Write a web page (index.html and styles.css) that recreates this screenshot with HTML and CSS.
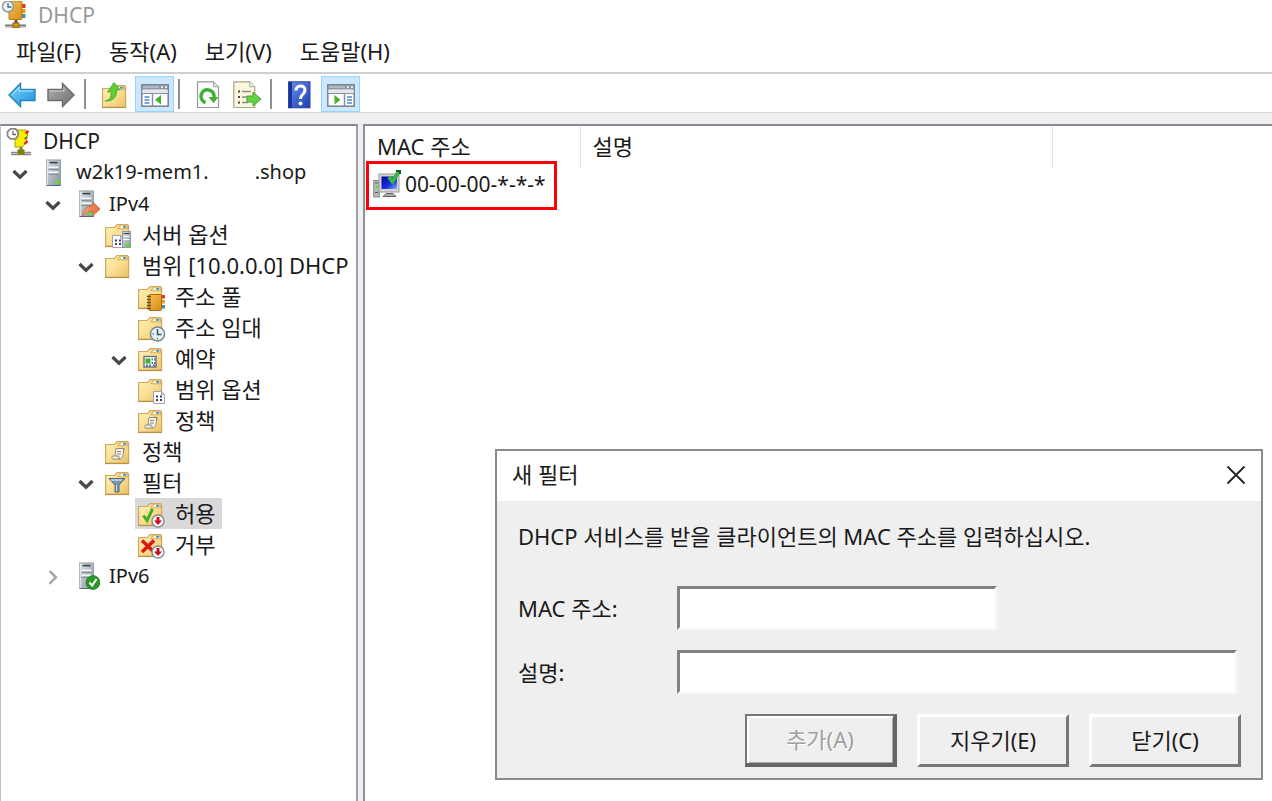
FILE: index.html
```html
<!DOCTYPE html>
<html lang="ko">
<head>
<meta charset="utf-8">
<title>DHCP</title>
<link rel="stylesheet" href="styles.css">
</head>
<body>
<svg class="defs" aria-hidden="true">
  <defs>
    <linearGradient id="gFolder" x1="0" y1="0" x2="1" y2="1"><stop offset="0" stop-color="#fff0b8"/><stop offset=".5" stop-color="#fbdf94"/><stop offset="1" stop-color="#e9bf62"/></linearGradient>
    <linearGradient id="gServer" x1="0" y1="0" x2="1" y2="1"><stop offset="0" stop-color="#dfe4e8"/><stop offset="1" stop-color="#84929d"/></linearGradient>
    <linearGradient id="gBlue" x1="0" y1="0" x2="1" y2="1"><stop offset="0" stop-color="#7fd6fb"/><stop offset="1" stop-color="#1b8fdc"/></linearGradient>
    <linearGradient id="gGray" x1="0" y1="0" x2="1" y2="1"><stop offset="0" stop-color="#b0b0b0"/><stop offset="1" stop-color="#6f6f6f"/></linearGradient>
    <linearGradient id="gHelp" x1="0" y1="0" x2="1" y2="1"><stop offset="0" stop-color="#6d8fe8"/><stop offset="1" stop-color="#1c3fb4"/></linearGradient>
    <linearGradient id="gBook" x1="0" y1="0" x2="1" y2="1"><stop offset="0" stop-color="#f6c15a"/><stop offset="1" stop-color="#d98a12"/></linearGradient>
    <linearGradient id="gArrow" x1="0" y1="0" x2="1" y2="0"><stop offset="0" stop-color="#f6a37c"/><stop offset="1" stop-color="#ea6a35"/></linearGradient>
    <linearGradient id="gScreen" x1="0" y1="0" x2="1" y2="1"><stop offset="0" stop-color="#0000a0"/><stop offset=".6" stop-color="#1c34d8"/><stop offset="1" stop-color="#7fb4ff"/></linearGradient>
    <symbol id="folder" viewBox="0 0 28 28">
      <path d="M.6 6.500 9.500 6.500 12 3.600 22.500 3.600 23.600 5v20.400H.6z" fill="url(#gFolder)" stroke="#d0a95c" stroke-width="1.200"/>
      <path d="M12.500 7.800 14.300 5h7.700l1 2.800z" fill="#f7d98c" stroke="#c9a050" stroke-width=".7"/>
      <rect x="16" y="5" width="5" height="1.800" fill="#fff"/><rect x="18" y="5" width="3" height="1.800" fill="#3f9be0"/>
      <path d="M0 25.500h24" stroke="#b9924a" stroke-width="1.200"/>
    </symbol>
    <symbol id="server" viewBox="0 0 28 28">
      <rect x="7.600" y="1" width="13.800" height="25.500" fill="url(#gServer)" stroke="#8c979f" stroke-width="1"/>
      <path d="M8.200 1.500v24.500" stroke="#eef2f4"/>
      <path d="M10.500 3.600h8" stroke="#34424c" stroke-width="1.600"/>
      <path d="M9.500 8.500h10M9.500 13.500h10" stroke="#f6fafc" stroke-width="2"/>
      <path d="M9.500 10.200h10M9.500 15.200h10" stroke="#6c7c88"/>
      <path d="M8 26.500h13.500" stroke="#59656e"/>
      <rect x="16.500" y="22" width="3.500" height="3" fill="#5ee51c"/>
    </symbol>
    <symbol id="notes" viewBox="0 0 12 13">
      <path d="M.5.5h8l3 3v9H.5z" fill="#fff" stroke="#a3a3ad"/><path d="M8.500.5v3h3" fill="none" stroke="#a3a3ad"/>
      <path d="M3 5.500h2M7 5.500h2M3 9h2M7 9h2" stroke="#3b3b6b" stroke-width="2"/>
    </symbol>
    <symbol id="scroll" viewBox="0 0 28 28">
      <use href="#folder"/>
      <path d="M11 10.500h8.500c-1 1-1 2-1 3.500-.3 3-.8 7-4 7H7.500c-1-.5-1-3 .5-3h2c.5-3 .3-6 1-7.500z" fill="#f4f1e6" stroke="#8f8b80"/>
      <path d="M10 18h3.500c.8 1-.2 3 1.500 3M12 13.500h4M11.800 16h4M16 10.500c2-1.500 4 2 2.500 3" fill="none" stroke="#8a867a"/>
    </symbol>
    <symbol id="down" viewBox="0 0 14 14">
      <circle cx="7" cy="7" r="6" fill="#fff" stroke="#8a8a8a" stroke-width="1.400"/><path d="M5.500 3h3v3.500h2.700L7 11 2.800 6.500h2.700z" fill="#c41425"/>
    </symbol>
    <symbol id="chev" viewBox="0 0 16 16"><path d="M1.500 5 8 11.200 14.500 5" fill="none" stroke="#484848" stroke-width="3.200"/></symbol>
    <symbol id="console" viewBox="0 0 28 28">
      <rect x=".8" y="3.800" width="26.400" height="21.400" fill="#fff" stroke="#79818e" stroke-width="1.500"/>
      <rect x="1" y="4" width="26" height="4.500" fill="#8d96a5"/><path d="M2 6h16" stroke="#c9d0da" stroke-width="1.200"/><path d="M20 6h2M24 6h2" stroke="#fff" stroke-width="1.500"/>
      <path d="M1.500 10.500h25" stroke="#e3e7ee" stroke-width="3"/><path d="M1 12.500h26" stroke="#8690a0"/>
    </symbol>
  </defs>
</svg>

<header class="titlebar">
  <svg class="icon" viewBox="0 0 28 28" aria-hidden="true">
    <path d="M4 24.500h21" stroke="#777" stroke-width="2"/><path d="M4 26.500h21" stroke="#ccc"/>
    <path d="M15 18v5" stroke="#555" stroke-width="3"/><rect x="12" y="22" width="6" height="4.500" fill="#d09a10" stroke="#8a6508"/>
    <path d="M20.500 3h4v4h-4z" fill="#e33526"/><path d="M20.500 8h4v4h-4z" fill="#d6a428"/><path d="M20.500 13h4v4h-4z" fill="#3a92a2"/>
    <rect x="8" y="0" width="13" height="18.500" rx="1" fill="url(#gBook)" stroke="#ba7a18"/>
    <circle cx="7" cy="5.500" r="5.500" fill="#edf6fa" stroke="#8b98a2" stroke-width="1.500"/><path d="M7 2v4h3.500" fill="none" stroke="#52606b" stroke-width="1.300"/>
  </svg>
  <h1 class="titlebar-text">DHCP</h1>
</header>

<nav class="menubar">
  <button class="menu">파일(F)</button>
  <button class="menu">동작(A)</button>
  <button class="menu">보기(V)</button>
  <button class="menu">도움말(H)</button>
</nav>

<div class="toolbar">
  <button class="tool" aria-label="뒤로"><svg class="icon" viewBox="0 0 28 28"><path d="M1 14 12.500 2.500v6h14.500v11H12.500v6z" fill="url(#gBlue)" stroke="#2684bb" stroke-width="1.400"/><path d="M4 13.500 11 6.500v3.500h14" fill="none" stroke="#b8ecff"/></svg></button>
  <button class="tool" aria-label="앞으로"><svg class="icon" viewBox="0 0 28 28"><path d="M27 14 15.500 2.500v6H1v11h14.500v6z" fill="url(#gGray)" stroke="#6c6c6c" stroke-width="1.400"/><path d="M2.500 10H17V6.500" fill="none" stroke="#d0d0d0"/></svg></button>
  <span class="sep"></span>
  <button class="tool" aria-label="한 수준 위로"><svg class="icon" viewBox="0 0 28 28"><use href="#folder" x="2" y="1" width="28" height="28"/><path d="M5 20c5-1 6.500-4 6-9H7.500L14 1.500 20 8.500l-3.500 1c1 6-4 11.500-11.500 10.500z" fill="#5fcb36" stroke="#46a626" stroke-width=".8"/></svg></button>
  <button class="tool on" aria-label="콘솔 트리 표시"><svg class="icon" viewBox="0 0 28 28"><use href="#console"/><path d="M11.500 12.500v12.500" stroke="#8690a0" stroke-width="1.500"/><path d="M3.500 16h5M3.500 19h5M3.500 22h5" stroke="#4d86cc" stroke-width="1.500"/><path d="M20 14v9.500L14 18.800z" fill="#48b02c"/></svg></button>
  <span class="sep"></span>
  <button class="tool" aria-label="새로 고침"><svg class="icon" viewBox="0 0 28 28"><path d="M3.500.8h16l5 5v20.700h-21z" fill="#fafafa" stroke="#999" stroke-width="1.200"/><path d="M19.500.8v5h5" fill="#ddd" stroke="#aaa"/><path d="M11.500 21.500A6.500 6.500 0 1 1 20 16" fill="none" stroke="#3fb035" stroke-width="3.600"/><path d="M14.500 16h10L19.500 22z" fill="#3fb035"/></svg></button>
  <button class="tool" aria-label="목록 내보내기"><svg class="icon" viewBox="0 0 28 28"><path d="M.8.800h16l5 5v20.700h-21z" fill="#fdf8dc" stroke="#aaa48c" stroke-width="1.200"/><path d="M16.800.8v5h5" fill="#eee" stroke="#aaa"/><path d="M5 10.500h2M5 16h2M5 21.500h2" stroke="#444" stroke-width="2"/><path d="M9 10.500h9M9 16h6M9 21.500h6" stroke="#8d8a99" stroke-width="1.600"/><path d="M14 15h6v-4l8 7-8 7v-4h-6z" fill="#65cf45" stroke="#48a92e"/></svg></button>
  <span class="sep"></span>
  <button class="tool" aria-label="도움말"><svg class="icon" viewBox="0 0 28 28"><rect x="2.500" y=".8" width="21.500" height="26" fill="url(#gHelp)" stroke="#2846a4"/><path d="M4.500 1v26" stroke="#17349c" stroke-width="3"/><path d="M10 9.500c0-6 9-6 9-.5 0 4.500-4.500 4-4.500 9" fill="none" stroke="#fff" stroke-width="3"/><circle cx="14.500" cy="22.500" r="2" fill="#fff"/></svg></button>
  <button class="tool on" aria-label="작업 창 표시"><svg class="icon" viewBox="0 0 28 28"><use href="#console"/><path d="M17.500 12.500v12.500" stroke="#8690a0" stroke-width="1.500"/><path d="M20 16h5M20 19h5M20 22h5" stroke="#4d86cc" stroke-width="1.500"/><path d="M7.500 14v9.500l6-4.700z" fill="#48b02c"/></svg></button>
</div>

<main class="panes">
  <section class="pane tree">
    <div class="node">
      <svg class="icon" viewBox="0 0 28 28"><path d="M5 24.500h20M5 26.500h20" stroke="#888" stroke-width="1.500"/><path d="M15 17v5" stroke="#777" stroke-width="3"/><rect x="11.500" y="21.500" width="7" height="5" fill="#808000"/><path d="M9 2h10.500l2 2v4l-1.500 1 1 5-5 5H9z" fill="#f5f000" stroke="#a8a400"/><path d="M19.500 5.500l3-2.500M18.500 16l3-3" stroke="#ef2020" stroke-width="2.400"/><path d="M18.500 11l3-2" stroke="#808000" stroke-width="2"/><path d="M4.500.8h5l2.500 3v4l-2.500 3h-5l-3-3v-4z" fill="#fff" stroke="#888" stroke-width="1.800"/><path d="M7 3v3.500H10" fill="none" stroke="#666" stroke-width="1.300"/></svg>
      <span class="latin">DHCP</span>
    </div>
    <ul class="branch">
      <li>
        <div class="row"><svg class="chev"><use href="#chev"/></svg><div class="node"><svg class="icon"><use href="#server"/></svg><span class="name host"><span>w2k19-mem1.</span><span>.shop</span></span></div></div>
        <ul class="branch nested">
          <li>
            <div class="row"><svg class="chev"><use href="#chev"/></svg><div class="node"><svg class="icon" viewBox="0 0 28 28"><use href="#server"/><path d="M11 26c0-7 4-10 10-10v-4l7 7-7 6.500V21c-4 0-7 1-10 5z" fill="url(#gArrow)" stroke="#d85f35" stroke-width=".8"/></svg><span class="name">IPv4</span></div></div>
            <ul class="branch nested">
              <li><div class="row leaf"><div class="node"><svg class="icon" viewBox="0 0 28 28"><use href="#folder"/><use href="#notes" x="7" y="14" width="12" height="13"/><rect x="17.500" y="10.500" width="8" height="16" fill="url(#gServer)" stroke="#8c979f"/><path d="M18.500 12.500h6" stroke="#34424c"/><path d="M18.500 15.500h6M18.500 18.500h6" stroke="#fff"/><rect x="21" y="22.500" width="4" height="3" fill="#5ee51c"/></svg><span>서버 옵션</span></div></div></li>
              <li>
                <div class="row"><svg class="chev"><use href="#chev"/></svg><div class="node"><svg class="icon"><use href="#folder"/></svg><span>범위 [10.0.0.0] DHCP</span></div></div>
                <ul class="branch nested">
                  <li><div class="row leaf"><div class="node"><svg class="icon" viewBox="0 0 28 28"><use href="#folder"/><path d="M23 12h4v3.500h-4z" fill="#e33526"/><path d="M23 17h4v3.500h-4z" fill="#d6a428"/><path d="M23 22h4v3.500h-4z" fill="#3a92a2"/><rect x="11" y="11.500" width="12.500" height="16" rx="1" fill="url(#gBook)" stroke="#a86a12"/><path d="M9 13.500h4M9 16.500h4M9 19.500h4M9 22.500h4M9 25.500h4" stroke="#6c4a14" stroke-width="1.300"/></svg><span>주소 풀</span></div></div></li>
                  <li><div class="row leaf"><div class="node"><svg class="icon" viewBox="0 0 28 28"><use href="#folder"/><circle cx="19.500" cy="20" r="7" fill="#e4f1f7" stroke="#7f8b94" stroke-width="1.600"/><path d="M19.500 15v5.500h4" fill="none" stroke="#35546c" stroke-width="1.500"/><path d="M19.500 24v1.500M14.500 20H16" stroke="#35546c"/></svg><span>주소 임대</span></div></div></li>
                  <li><div class="row"><svg class="chev"><use href="#chev"/></svg><div class="node"><svg class="icon" viewBox="0 0 28 28"><use href="#folder"/><rect x="6" y="11.500" width="12" height="10.500" fill="#fff" stroke="#64707c" stroke-width="1.400"/><rect x="7.500" y="13.500" width="5" height="5" fill="#35b52a"/><path d="M13.500 14.500h1.500M16 14.500h1.500M13.500 18h1.500M16 18h1.500M8 20.500h2M11 20.500h2M15 20.500h2" stroke="#51729c" stroke-width="2"/></svg><span>예약</span></div></div></li>
                  <li><div class="row leaf"><div class="node"><svg class="icon" viewBox="0 0 28 28"><use href="#folder"/><use href="#notes" x="15" y="15" width="12" height="13"/></svg><span>범위 옵션</span></div></div></li>
                  <li><div class="row leaf"><div class="node"><svg class="icon"><use href="#scroll"/></svg><span>정책</span></div></div></li>
                </ul>
              </li>
              <li><div class="row leaf"><div class="node"><svg class="icon"><use href="#scroll"/></svg><span>정책</span></div></div></li>
              <li>
                <div class="row"><svg class="chev"><use href="#chev"/></svg><div class="node"><svg class="icon" viewBox="0 0 28 28"><use href="#folder"/><path d="M4 9.500h16L14 16v7h-4v-7z" fill="#7595ad" stroke="#50697c"/><path d="M6 11h11" stroke="#c9dbe8" stroke-width="1.500"/><path d="M11.500 16v6" stroke="#d2e0ea"/></svg><span>필터</span></div></div>
                <ul class="branch nested">
                  <li><div class="row leaf"><div class="node selected"><svg class="icon" viewBox="0 0 28 28"><use href="#folder"/><path d="M5.500 15.500 9 20.500 14.500 9" fill="none" stroke="#3fae2a" stroke-width="3"/><use href="#down" x="13" y="14" width="14" height="14"/></svg><span>허용</span></div></div></li>
                  <li><div class="row leaf"><div class="node"><svg class="icon" viewBox="0 0 28 28"><use href="#folder"/><path d="M4 9.500 16 21M16 9.500 4 21" stroke="#df1616" stroke-width="3.600"/><use href="#down" x="13" y="14" width="14" height="14"/></svg><span>거부</span></div></div></li>
                </ul>
              </li>
            </ul>
          </li>
          <li><div class="row"><svg class="chev" viewBox="0 0 16 16"><path d="M4.500 1.800 10.800 8.300 4.500 14.800" fill="none" stroke="#a8a8a8" stroke-width="2.600"/></svg><div class="node"><svg class="icon" viewBox="0 0 28 28"><use href="#server"/><circle cx="21" cy="20.500" r="6.800" fill="#2c9a28" stroke="#1f7a1d"/><path d="M17.500 20.500 20.200 23.500 24.500 17" fill="none" stroke="#fff" stroke-width="2"/></svg><span class="name">IPv6</span></div></div></li>
        </ul>
      </li>
    </ul>
  </section>

  <section class="pane content">
    <table class="list">
      <thead><tr><th class="col-mac">MAC 주소</th><th class="col-desc">설명</th><th></th></tr></thead>
      <tbody><tr>
        <td class="marked"><div class="entry"><svg class="icon" viewBox="0 0 28 28"><rect x=".7" y="10.500" width="5.600" height="16.500" fill="#b9b9b9" stroke="#888"/><path d="M2 13h3M2 22.500h3" stroke="#555"/><rect x="2.500" y="16" width="3" height="2" fill="#3df01c"/><path d="M10 26.500h13l-3-3h-7z" fill="#aaa" stroke="#666"/><rect x="6" y="4" width="20" height="18" fill="#d4d4d4" stroke="#999"/><rect x="8.500" y="6.500" width="15.500" height="12.500" fill="url(#gScreen)"/><path d="M16 7 19.500 11.500 25.500 2" fill="none" stroke="#35b545" stroke-width="4"/><path d="M23 1h4v3" fill="none" stroke="#13661b" stroke-width="2"/></svg><span class="latin">00-00-00-*-*-*</span></div></td><td></td><td></td>
      </tr></tbody>
    </table>
  </section>

  <form class="dialog" role="dialog" aria-labelledby="dlg-title">
    <header class="dialog-head">
      <h2 class="dialog-title" id="dlg-title">새 필터</h2>
      <button class="close" type="button" aria-label="창 닫기"><svg viewBox="0 0 20 20"><path d="M1.500 1.500 18.500 18.500M18.500 1.500 1.500 18.500" stroke="#222" stroke-width="1.800"/></svg></button>
    </header>
    <div class="dialog-body">
      <p class="prompt">DHCP 서비스를 받을 클라이언트의 MAC 주소를 입력하십시오.</p>
      <div class="fields">
        <label for="mac">MAC 주소:</label><input class="short" id="mac" type="text">
        <label for="desc">설명:</label><input id="desc" type="text">
      </div>
    </div>
    <footer class="actions">
      <button class="btn default" type="submit" disabled>추가(A)</button>
      <button class="btn" type="reset">지우기(E)</button>
      <button class="btn" type="button">닫기(C)</button>
    </footer>
  </form>
</main>
</body>
</html>
```
FILE: styles.css
```css
* { box-sizing: border-box; }
body {
  margin: 0;
  min-height: 100vh;
  display: flex;
  flex-direction: column;
  overflow: hidden;
  background: #fff;
  color: #1a1a1a;
  font: 22px/31px "Noto Sans", "Noto Sans CJK KR", sans-serif;
}
button, input { font: inherit; color: inherit; }
h1, h2, p, ul { margin: 0; padding: 0; font-size: inherit; font-weight: normal; }
ul { list-style: none; }
.defs { position: absolute; width: 0; height: 0; }
.icon { display: block; flex: none; width: 28px; height: 28px; }
.latin { font-size: 21px; }
.name { font-size: 20px; }

.titlebar { display: flex; align-items: center; gap: 9px; height: 30px; padding-left: 1px; }
.titlebar-text { color: #999; font-size: 21px; }

.menubar { display: flex; align-items: center; gap: 28px; height: 44px; padding-left: 16px; border-bottom: 2px solid #ccced2; }
.menu { padding: 0; border: 0; background: none; white-space: nowrap; }

.toolbar { display: flex; align-items: center; height: 39px; padding: 2px 2px 1px; border-bottom: 1px solid #d6d6d6; }
.tool { display: flex; align-items: center; justify-content: center; width: 39px; height: 36px; padding: 2px 0 0; border: 0; background: none; }
.tool.on { margin-left: 2px; border: 1px solid #99d1ff; background: #cce8ff; }
.sep { width: 2px; height: 30px; margin: 0 8px 0 4px; background: #909090; }

.panes { position: relative; flex: 1; display: grid; grid-template-columns: 358px 1fr; gap: 5px; padding-top: 11px; background: #efefef; }
.pane { background: #fff; border-top: 2px solid #858a93; }
.tree { border-left: 1px solid #bcc0c8; border-right: 2px solid #9a9fa8; padding-left: 2px; }
.content { border-left: 2px solid #8b9099; }

.nested { padding-left: 33px; }
.row { display: flex; align-items: center; }
.row.leaf { padding-left: 33px; }
.chev { flex: none; width: 16px; height: 16px; margin: 2px 8px 0 9px; }
.node { display: flex; align-items: center; gap: 9px; width: max-content; height: 31px; padding: 0 7px 0 3px; white-space: nowrap; }
.node span { padding-bottom: 1px; }
.selected { background: #d9d9d9; }
.host { display: flex; gap: 46px; }

.list { width: 100%; border-collapse: collapse; table-layout: fixed; }
.list th { height: 42px; padding: 0 12px 2px; border-right: 1px solid #e2e2e2; font-weight: normal; text-align: left; }
.list th:last-child { border-right: 0; }
.list td { padding: 0; }
.col-mac { width: 215px; }
.col-desc { width: 472px; }
.marked { position: relative; }
.marked::after { content: ""; position: absolute; inset: -7px 23px -10px 1px; border: 3px solid #fb0007; }
.entry { display: flex; align-items: center; gap: 4px; height: 32px; padding-left: 8px; }

.dialog { position: absolute; top: 336px; right: 9px; left: 495px; border: 2px solid #8a8a8a; background: #efefef; }
.dialog-head { display: flex; align-items: center; justify-content: space-between; height: 50px; padding: 0 15px 3px; background: #fff; }
.close { display: flex; padding: 0; border: 0; background: none; }
.close svg { width: 20px; height: 20px; }
.dialog-body { padding: 20px 24px 0 21px; }
.prompt { white-space: nowrap; }
.fields { display: grid; grid-template-columns: 159px 1fr; align-items: center; row-gap: 20px; padding-top: 34px; }
.fields input { width: 100%; height: 44px; padding: 0 8px; border: 3px solid; border-color: #828282 #f8f8f8 #f8f8f8 #828282; background: #fff; outline: 0; }
.fields .short { width: 320px; }
.actions { display: flex; justify-content: flex-end; gap: 20px; padding: 20px 20px 11px; }
.btn { width: 152px; height: 53px; padding: 0; border: 3px solid; border-color: #fff #777 #777 #fff; background: #efefef; }
.btn.default { border-color: #777 #666 #666 #777; border-width: 2px 4px 4px 2px; box-shadow: inset 2px 2px #fff, inset -1px -1px #aaa; color: #a0a0a0; text-shadow: 1px 1px #fff; }
```
